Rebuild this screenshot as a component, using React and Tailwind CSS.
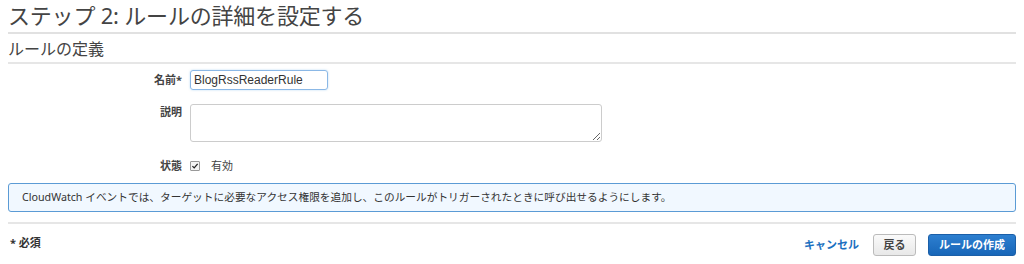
export default function App() {
  const font = { fontFamily: '"Noto Sans", "Noto Sans CJK JP", sans-serif' };
  return (
    <div className="w-[1024px] h-[264px] bg-white overflow-hidden text-[#444]" style={font}>
      <div className="px-[8px]">
        <h1 className="text-[22px] leading-[28px] pt-[1px] pb-[3px] border-b-2 border-[#e1e1e1] text-[#444] tracking-[-0.2px]">
          ステップ 2: ルールの詳細を設定する
        </h1>
        <h2 className="text-[16px] leading-[24px] pt-[3px] pb-[1px] border-b-2 border-[#e6e6e6] text-[#444]">
          ルールの定義
        </h2>
        <div className="flex flex-col mt-[6px]">
          <div className="flex items-center h-[20px]">
            <div className="w-[174px] text-right pr-[0px] text-[11px] font-bold text-[#444]">名前*</div>
            <input
              readOnly
              value="BlogRssReaderRule"
              className="ml-[8px] w-[138px] h-[20px] border border-[#8bb8e6] rounded-[3px] px-[3px] text-[12px] text-[#333] shadow-[0_0_2px_rgba(102,175,233,0.5)] outline-none"
              style={{ fontFamily: '"Liberation Sans", "Noto Sans", sans-serif' }}
            />
          </div>
          <div className="flex items-start mt-[14px]">
            <div className="w-[174px] text-right text-[11px] font-bold text-[#444] pt-[0px]">説明</div>
            <textarea
              readOnly
              className="ml-[8px] w-[412px] h-[38px] border border-[#ccc] rounded-[3px] resize-y outline-none"
            />
          </div>
          <div className="flex items-center mt-[16px] h-[16px]">
            <div className="w-[174px] text-right text-[11px] font-bold text-[#444]">状態</div>
            <span className="ml-[8px] w-[10px] h-[10px] border border-[#999] rounded-[1px] bg-[#f4f4f4] flex items-center justify-center">
              <svg viewBox="0 0 10 10" width="8" height="8">
                <path d="M1.8 5.2 L4 7.4 L8.3 2.4" fill="none" stroke="#222" strokeWidth="1.6" />
              </svg>
            </span>
            <span className="ml-[11px] text-[11px] text-[#444]">有効</span>
          </div>
        </div>
        <div className="mt-[9px] h-[29px] border border-[#5b9bd5] rounded-[3px] bg-[#f1f8ff] flex items-center px-[13px] text-[10.7px] text-[#333]">
          CloudWatch イベントでは、ターゲットに必要なアクセス権限を追加し、このルールがトリガーされたときに呼び出せるようにします。
        </div>
        <div className="mt-[10px] border-t-2 border-[#e6e6e6] flex items-start justify-between pt-[10px]">
          <div className="text-[11px] font-bold text-[#333] pl-[2px] pt-[1px]">* 必須</div>
          <div className="flex items-center gap-[0px]">
            <span className="text-[11px] font-bold text-[#1a6fc0] mr-[14px]">キャンセル</span>
            <button className="h-[22px] w-[43px] border border-[#bbb] rounded-[3px] bg-gradient-to-b from-[#fafafa] to-[#e8e8e8] text-[11px] font-bold text-[#444] mr-[12px]">
              戻る
            </button>
            <button className="h-[22px] w-[88px] border border-[#1b5fa8] rounded-[3px] bg-gradient-to-b from-[#2d7fd0] to-[#1766b8] text-[11px] font-bold text-white">
              ルールの作成
            </button>
          </div>
        </div>
      </div>
    </div>
  );
}
